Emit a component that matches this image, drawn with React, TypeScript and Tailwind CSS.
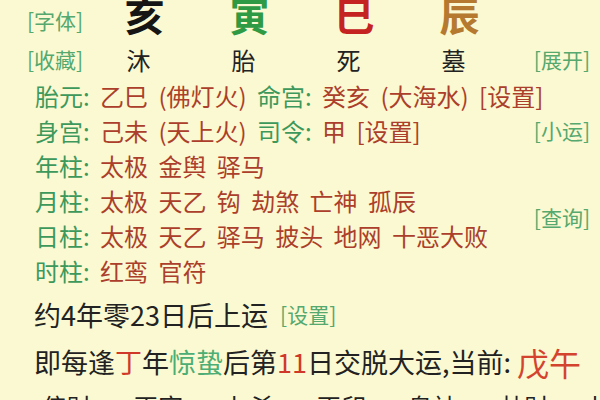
const green = "text-[#3d985c]";
const red = "text-[#ab3f2b]";

function Row({ label, children }: { label: string; children: React.ReactNode }) {
  return (
    <div className="flex h-[35px] items-center whitespace-pre">
      <span className={green}>{label}: </span>
      <span className={red}>{children}</span>
    </div>
  );
}

export default function App() {
  const branches = [
    { ch: "亥", color: "text-[#151515]" },
    { ch: "寅", color: "text-[#2f9a44]" },
    { ch: "巳", color: "text-[#c52222]" },
    { ch: "辰", color: "text-[#b57a30]" },
  ];
  const states = ["沐", "胎", "死", "墓"];
  const gods = ["偏财", "正官", "七杀", "正印", "枭神", "劫财", "比肩"];

  return (
    <div className="h-[400px] w-[600px] overflow-hidden bg-[#fbf9d1] font-['Noto_Sans_CJK_SC',sans-serif] text-[#222]">
      {/* top: branches */}
      <div className="flex h-[41px] items-center pl-[27px]">
        <span className="w-[58px] text-[21px] text-[#55a86e]">[字体]</span>
        <div className="ml-[7px] flex">
          {branches.map((b) => (
            <span
              key={b.ch}
              className={`-mt-[14px] w-[105px] text-center text-[40px] font-bold leading-none ${b.color}`}
            >
              {b.ch}
            </span>
          ))}
        </div>
      </div>

      <div className="flex h-[37px] items-center pl-[27px] pr-[10px]">
        <span className="w-[59px] text-[21px] text-[#55a86e]">[收藏]</span>
        <div className="flex">
          {states.map((s) => (
            <span key={s} className="w-[105px] text-center text-[24px]">
              {s}
            </span>
          ))}
        </div>
        <span className="ml-auto text-[21px] text-[#55a86e]">[展开]</span>
      </div>

      {/* pillars */}
      <div className="grid grid-cols-[minmax(0,1fr)_60px] grid-rows-[repeat(6,35px)] pl-[35px] pr-[10px] text-[24px] [word-spacing:5px]">
        <div className="col-start-1 row-start-1">
          <div className="flex h-[35px] items-center whitespace-pre">
            <span className={green}>胎元: </span>
            <span className={red}>乙巳 (佛灯火) </span>
            <span className={green}>命宫: </span>
            <span className={red}>癸亥 (大海水) [设置]</span>
          </div>
        </div>
        <div className="col-start-1 row-start-2">
          <div className="flex h-[35px] items-center whitespace-pre">
            <span className={green}>身宫: </span>
            <span className={red}>己未 (天上火) </span>
            <span className={green}>司令: </span>
            <span className={red}>甲 [设置]</span>
          </div>
        </div>
        <div className="col-start-2 row-start-2 flex items-center justify-end whitespace-nowrap text-[21px] text-[#55a86e]">
          [小运]
        </div>
        <div className="col-start-1 row-start-3">
          <Row label="年柱">太极 金舆 驿马</Row>
        </div>
        <div className="col-start-1 row-start-4">
          <Row label="月柱">太极 天乙 钩 劫煞 亡神 孤辰</Row>
        </div>
        <div className="col-start-2 row-span-2 row-start-4 flex items-center justify-end whitespace-nowrap text-[21px] text-[#55a86e]">
          [查询]
        </div>
        <div className="col-start-1 row-start-5">
          <Row label="日柱">太极 天乙 驿马 披头 地网 十恶大败</Row>
        </div>
        <div className="col-start-1 row-start-6">
          <Row label="时柱">红鸾 官符</Row>
        </div>
      </div>

      {/* luck */}
      <div className="flex h-[46px] items-center whitespace-pre pl-[34px] pt-[8px] text-[27px]">
        <span>约4年零23日后上运  </span>
        <span className="text-[21px] text-[#55a86e]">[设置]</span>
      </div>
      <div className="flex h-[48px] items-end whitespace-pre pl-[34px] text-[27px] leading-[40px]">
        <span>即每逢</span>
        <span className="text-[#d0382a]">丁</span>
        <span>年</span>
        <span className="text-[#4cae74]">惊蛰</span>
        <span>后第</span>
        <span className="text-[#d0382a]">11</span>
        <span>日交脱大运,当前: </span>
        <span className="text-[32px] text-[#d4432e]">戊午</span>
      </div>
      <div className="grid grid-cols-[repeat(7,91.5px)] pl-[21px] pt-[6px] text-[25px]">
        {gods.map((g) => (
          <span key={g} className="text-center">
            {g}
          </span>
        ))}
      </div>
    </div>
  );
}
